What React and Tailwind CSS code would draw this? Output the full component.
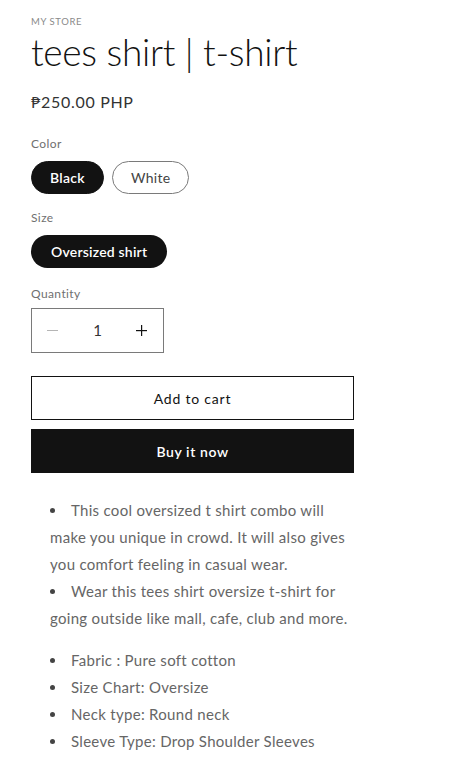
import React, { useState } from 'react';

const font = { fontFamily: 'Lato, "Open Sans", sans-serif' };

const App = () => {
  const [color, setColor] = useState('Black');
  const [qty, setQty] = useState(1);

  return (
    <div className="min-h-screen bg-white text-[#121212]" style={font}>
      <div className="pl-[31px] pr-[100px] pt-[15px] pb-6">
        {/* Header */}
        <p className="text-[9.5px] uppercase tracking-[0.6px] text-[#8a8a8a] leading-[13px]">My Store</p>
        <h1 className="mt-[1px] text-[37px] font-light leading-[46px] tracking-[-0.3px] text-[#121212]">
          tees shirt | t-shirt
        </h1>
        <p className="mt-[17px] text-[16px] tracking-[0.7px] text-[#333] leading-[20px]">₱250.00 PHP</p>

        {/* Color */}
        <p className="mt-[24px] text-[12px] tracking-[0.4px] text-[#707070] leading-[16px]">Color</p>
        <div className="mt-[9px] flex gap-2">
          {['Black', 'White'].map((c) => (
            <button
              key={c}
              onClick={() => setColor(c)}
              className={`h-[33px] rounded-full px-[18px] text-[14px] tracking-[0.3px] border ${
                color === c
                  ? 'bg-[#121212] border-[#121212] text-white font-semibold'
                  : 'bg-white border-[#7a7a7a] text-[#444]'
              }`}
            >
              {c}
            </button>
          ))}
        </div>

        {/* Size */}
        <p className="mt-[16px] text-[12px] tracking-[0.4px] text-[#707070] leading-[16px]">Size</p>
        <div className="mt-[9px] flex">
          <button className="h-[33px] rounded-full px-[20px] text-[14px] tracking-[0.2px] bg-[#121212] text-white font-semibold">
            Oversized shirt
          </button>
        </div>

        {/* Quantity */}
        <p className="mt-[18px] text-[12px] tracking-[0.4px] text-[#707070] leading-[16px]">Quantity</p>
        <div className="mt-[6px] flex items-center w-[133px] h-[45px] border border-[#7a7a7a]">
          <button onClick={() => setQty(Math.max(1, qty - 1))} className="w-[44px] pr-[4px] h-full flex items-center justify-center">
            <svg width="11" height="2" viewBox="0 0 11 2"><rect width="11" height="1" fill="#b5b5b5" /></svg>
          </button>
          <span className="flex-1 text-center text-[15px] text-[#333]">{qty}</span>
          <button onClick={() => setQty(qty + 1)} className="w-[44px] h-full flex items-center justify-center">
            <svg width="11" height="11" viewBox="0 0 11 11">
              <rect x="0" y="5" width="11" height="1.2" fill="#121212" />
              <rect x="5" y="0" width="1.2" height="11" fill="#121212" />
            </svg>
          </button>
        </div>

        {/* Buttons */}
        <button className="mt-[23px] w-[323px] h-[44px] border border-[#121212] text-[14px] tracking-[0.8px] text-[#121212]">
          Add to cart
        </button>
        <button className="mt-[9px] w-[323px] h-[44px] bg-[#121212] text-white text-[14px] tracking-[0.6px] font-semibold block">
          Buy it now
        </button>

        {/* Description */}
        <div className="mt-[24px] pl-[19px] w-[326px] text-[15px] leading-[27px] tracking-[0.3px] text-[#666]">
          <ul className="list-disc list-inside marker:text-[#444]">
            <li>
              This cool oversized t shirt combo will make you unique in crowd. It will also gives you comfort feeling in casual wear.
            </li>
            <li>
              Wear this tees shirt oversize t-shirt for going outside like mall, cafe, club and more.
            </li>
          </ul>
          <ul className="mt-[15px] list-disc list-inside marker:text-[#444]">
            <li>Fabric : Pure soft cotton</li>
            <li>Size Chart: Oversize</li>
            <li>Neck type: Round neck</li>
            <li>Sleeve Type: Drop Shoulder Sleeves</li>
          </ul>
        </div>
      </div>
    </div>
  );
};

export default App;
